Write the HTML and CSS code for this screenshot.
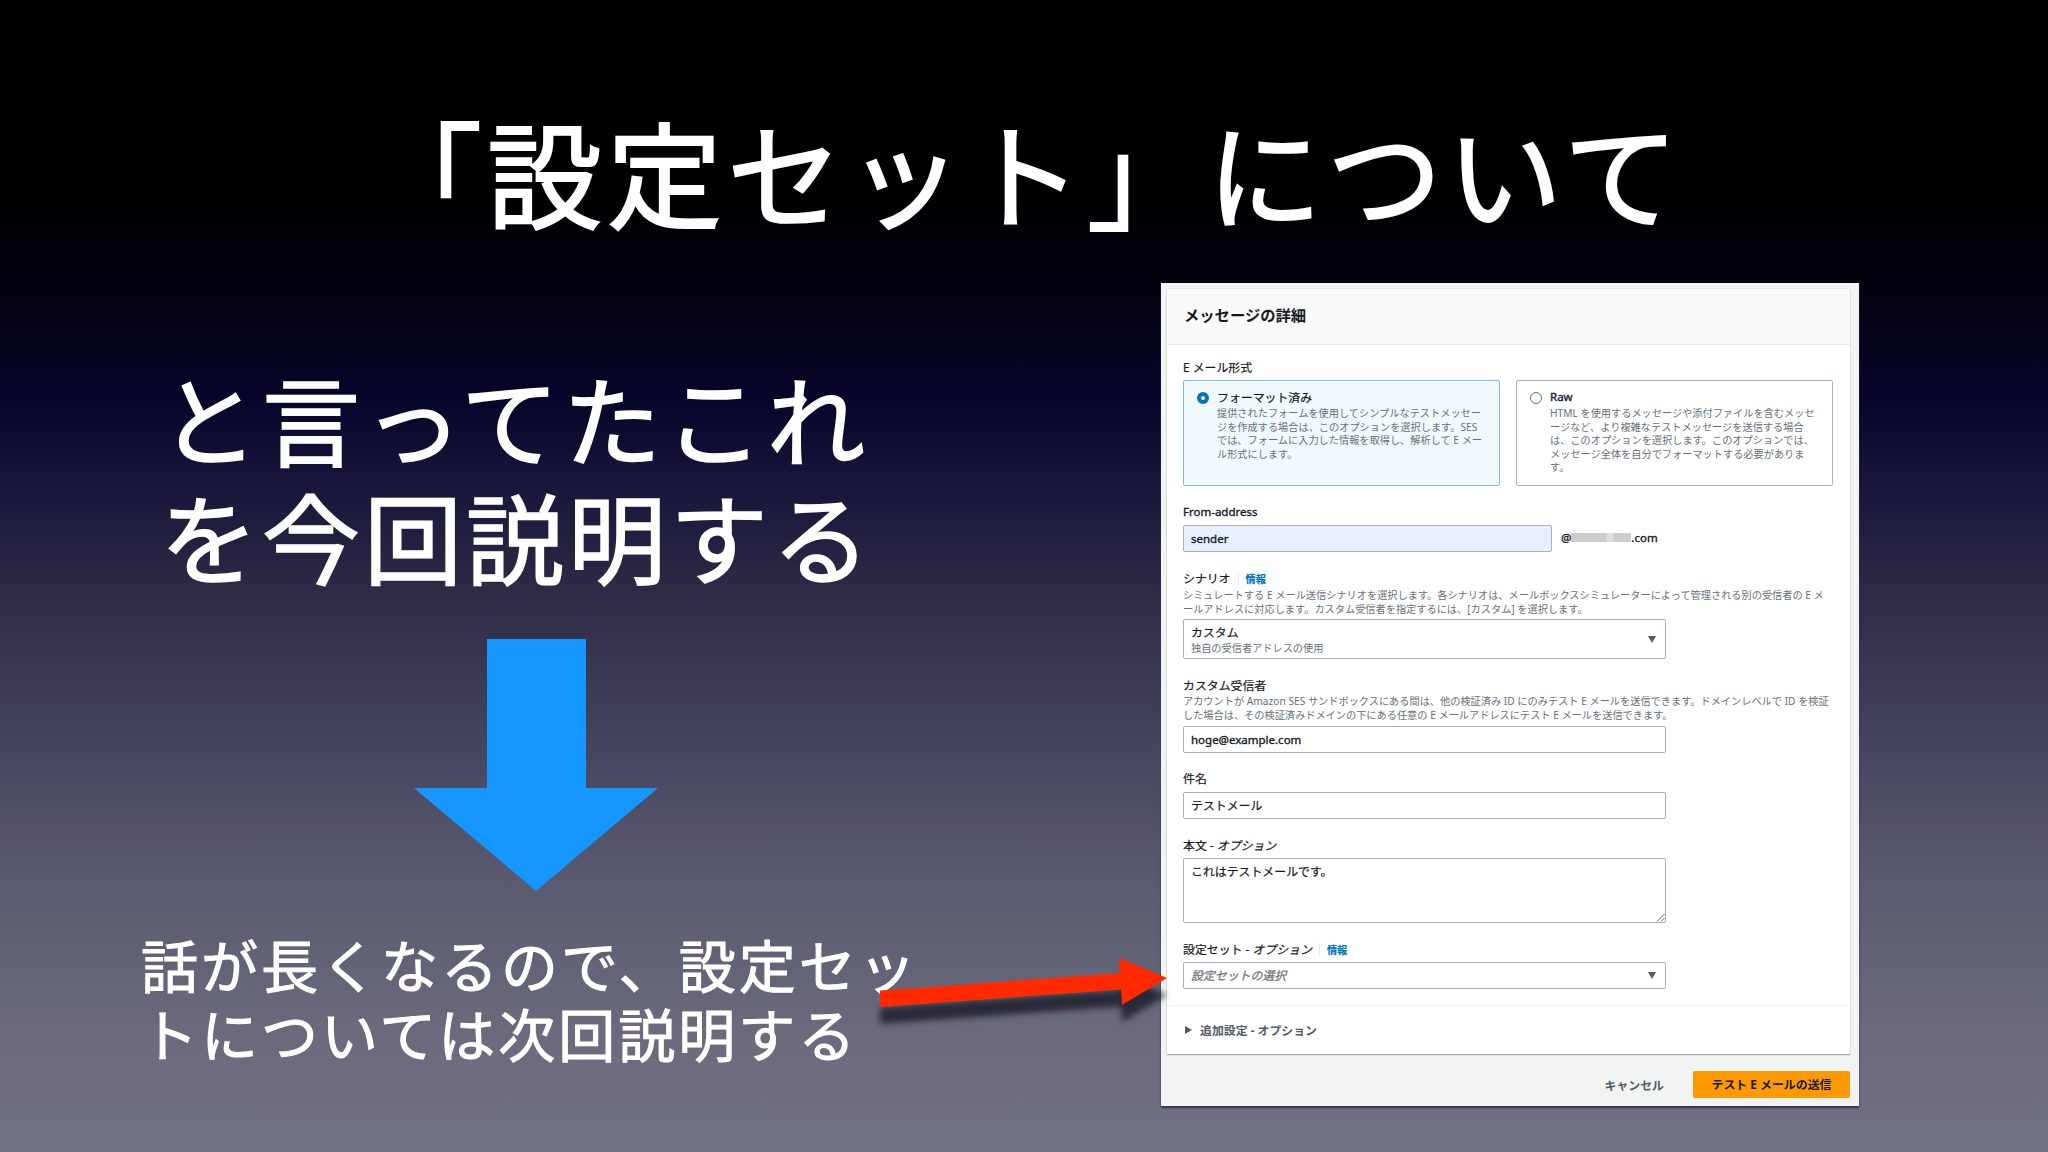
FILE: index.html
```
<!DOCTYPE html>
<html lang="ja">
<head>
  <meta charset="UTF-8">
  <title>「設定セット」について</title>
  <link rel="stylesheet" href="styles.css">
</head>
<body>
  <div class="slide">
    <h1>「設定セット」について</h1>

    <div class="content">
      <div class="story">
        <p class="lead">と言ってたこれ<br>を今回説明する</p>
        <svg class="down-arrow" width="244" height="252" viewBox="0 0 244 252">
          <path d="M73 0H172V149H244L122 252L0 149H73Z" fill="#1696ff"/>
        </svg>
        <p class="note">話が長くなるので、設定セッ<br>トについては次回説明する</p>
      </div>

      <div class="panel">
        <div class="card">
          <h2>メッセージの詳細</h2>

          <div class="form">
            <div class="field">
              <div class="label">E メール形式</div>
              <div class="options">
                <div class="option selected">
                  <span class="radio"></span>
                  <div>
                    <div class="label">フォーマット済み</div>
                    <p class="hint">提供されたフォームを使用してシンプルなテストメッセー<br>ジを作成する場合は、このオプションを選択します。SES<br>では、フォームに入力した情報を取得し、解析して E メー<br>ル形式にします。</p>
                  </div>
                </div>
                <div class="option">
                  <span class="radio"></span>
                  <div>
                    <div class="label latin">Raw</div>
                    <p class="hint">HTML を使用するメッセージや添付ファイルを含むメッセ<br>ージなど、より複雑なテストメッセージを送信する場合<br>は、このオプションを選択します。このオプションでは、<br>メッセージ全体を自分でフォーマットする必要がありま<br>す。</p>
                  </div>
                </div>
              </div>
            </div>

            <div class="field from">
              <div class="label latin">From-address</div>
              <div class="from-row">
                <div class="input filled latin">sender</div>
                <div class="domain latin">@<span class="mask"></span>.com</div>
              </div>
            </div>

            <div class="field scenario">
              <div class="label">シナリオ<span class="info">情報</span></div>
              <p class="hint">シミュレートする E メール送信シナリオを選択します。各シナリオは、メールボックスシミュレーターによって管理される別の受信者の E メ<br>ールアドレスに対応します。カスタム受信者を指定するには、[カスタム] を選択します。</p>
              <div class="input select tall">
                <div>
                  <div class="label">カスタム</div>
                  <p class="hint">独自の受信者アドレスの使用</p>
                </div>
                <span class="caret"></span>
              </div>
            </div>

            <div class="field recipient">
              <div class="label">カスタム受信者</div>
              <p class="hint">アカウントが Amazon SES サンドボックスにある間は、他の検証済み ID にのみテスト E メールを送信できます。ドメインレベルで ID を検証<br>した場合は、その検証済みドメインの下にある任意の E メールアドレスにテスト E メールを送信できます。</p>
              <div class="input latin">hoge@example.com</div>
            </div>

            <div class="field subject">
              <div class="label">件名</div>
              <div class="input">テストメール</div>
            </div>

            <div class="field body-text">
              <div class="label">本文 - <i>オプション</i></div>
              <div class="input textarea">これはテストメールです。
                <svg class="grip" width="9" height="9" viewBox="0 0 9 9">
                  <path d="M1 8.5L8.5 1M5 8.5L8.5 5" stroke="#666" fill="none"/>
                </svg>
              </div>
            </div>

            <div class="field config-set">
              <div class="label">設定セット - <i>オプション</i><span class="info">情報</span></div>
              <div class="input select">
                <i class="placeholder">設定セットの選択</i>
                <span class="caret"></span>
              </div>
            </div>
          </div>

          <div class="extra"><span class="triangle"></span>追加設定 - オプション</div>
        </div>

        <div class="actions">
          <span class="cancel">キャンセル</span>
          <span class="send">テスト E メールの送信</span>
        </div>
      </div>
    </div>

    <!-- pointer from the note to the config set field -->
    <svg class="pointer" width="310" height="90" viewBox="0 0 310 90">
      <path d="M10 40.5L250 23L249 8L297 28L252 55L251 39.5L10 57Z" fill="#ff2a00"/>
    </svg>
  </div>
</body>
</html>
```

FILE: styles.css
```
* {
  box-sizing: border-box;
}

body {
  margin: 0;
  font-family: "Noto Sans", "Noto Sans CJK JP", sans-serif;
  color: #16191f;
}

h1, h2, p {
  margin: 0;
  font-weight: normal;
}

.slide {
  position: relative;
  width: 2048px;
  height: 1152px;
  overflow: hidden;
  background: linear-gradient(#000 0, #000 180px, #02020f 290px, #06052a 400px, #151338 470px, #2c2a45 588px, #44435e 735px, #5a5a70 882px, #6a6a7c 1028px, #727285 1152px);
}

h1 {
  height: 283px;
  padding: 83px 0 0 367px;
  font-family: "Noto Sans CJK JP", sans-serif;
  font-size: 115px;
  line-height: 174px;
  letter-spacing: 5px;
  color: white;
  white-space: nowrap;
  -webkit-text-stroke: 2px white;
}

.content {
  display: flex;
}

.story {
  width: 1161px;
  padding-top: 74px;
  font-family: "Noto Sans CJK JP", sans-serif;
  color: white;
  white-space: nowrap;
}

.lead {
  padding-left: 160px;
  font-size: 98px;
  line-height: 118px;
  letter-spacing: 4px;
  -webkit-text-stroke: 1.6px white;
}

.down-arrow {
  display: block;
  margin: 46px 0 0 414px;
}

.note {
  margin-top: 38px;
  padding-left: 141px;
  font-size: 57px;
  line-height: 69px;
  letter-spacing: 3px;
  -webkit-text-stroke: 1px white;
}

.panel {
  width: 698px;
  height: 823px;
  padding: 6px 9px 0 6px;
  background: #f2f3f3;
  box-shadow: 0 2px 2px #33344a;
  white-space: nowrap;
}

.card {
  height: 765px;
  background: white;
  box-shadow: 0 1px 1px #aaa, 0 0 2px #ccc;
}

h2 {
  height: 56px;
  padding-left: 17px;
  border-bottom: 1px solid #eaeded;
  background: #fafafa;
  font-size: 15.3px;
  font-weight: bold;
  line-height: 52px;
}

.form {
  height: 661px;
  padding: 13px 17px 0 16px;
  border-bottom: 1px solid #eff0f0;
}

.label {
  font-size: 11.9px;
  line-height: 18px;
  -webkit-text-stroke: 0.2px currentColor;
}

.hint {
  padding-top: 1px;
  font-size: 10.2px;
  line-height: 13.6px;
  color: #687078;
  -webkit-text-stroke: 0;
}

.options {
  display: grid;
  grid-template-columns: 1fr 1fr;
  gap: 16px;
  margin-top: 4px;
}

.option {
  display: flex;
  height: 106px;
  padding: 7px 0 0 13px;
  border: 1px solid #aab7b8;
  border-radius: 2px;
}

.option.selected {
  border-color: #7fbfce;
  background: #f1faff;
}

.radio {
  width: 12px;
  height: 12px;
  margin: 4px 8px 0 0;
  border: 1px solid #687078;
  border-radius: 50%;
}

.selected .radio {
  border: 4px solid #0073bb;
}

.from {
  margin-top: 17px;
}

.from-row {
  display: flex;
  align-items: center;
  gap: 9px;
  margin-top: 4px;
}

.input {
  position: relative;
  width: 483px;
  height: 27px;
  padding-left: 7px;
  border: 1px solid #aab0b3;
  border-radius: 2px;
  font-size: 11.9px;
  line-height: 25px;
  -webkit-text-stroke: 0.2px currentColor;
}

.input.filled {
  width: 369px;
  background: #e8f0fe;
}

.domain {
  display: flex;
  align-items: center;
  height: 25px;
  padding-bottom: 2px;
}

.latin {
  font-size: 11.5px;
  -webkit-text-stroke: 0.35px currentColor;
}

.mask {
  width: 60px;
  height: 9px;
  background: linear-gradient(90deg, #ccc 0 58%, #ddd 60% 70%, #ccc 72%);
}

.info {
  margin-left: 7px;
  padding-left: 7px;
  border-left: 1px solid #eaeded;
  font-size: 10.2px;
  font-weight: bold;
  color: #0073bb;
}

.scenario {
  margin-top: 17px;
}

.select {
  display: flex;
  align-items: center;
  justify-content: space-between;
  padding-right: 9px;
}

.tall {
  height: 40px;
  margin-top: 3px;
}

.caret {
  border: 4.5px solid transparent;
  border-top: 7px solid #545b64;
  border-bottom: 0;
}

.recipient {
  margin-top: 17px;
}

.recipient .input {
  margin-top: 4px;
}

.subject {
  margin-top: 16px;
}

.subject .input {
  margin-top: 5px;
}

.body-text {
  margin-top: 17px;
}

.textarea {
  height: 65px;
  margin-top: 4px;
}

.grip {
  position: absolute;
  right: 0;
  bottom: 0;
}

.config-set {
  margin-top: 17px;
}

.config-set .input {
  margin-top: 3px;
}

.placeholder {
  color: #687078;
}

.extra {
  display: flex;
  align-items: center;
  height: 47px;
  padding-left: 18px;
  font-size: 11.9px;
  font-weight: bold;
  color: #545b64;
}

.triangle {
  margin-right: 8px;
  border: 4.5px solid transparent;
  border-left: 7px solid #545b64;
  border-right: 0;
}

.actions {
  display: flex;
  align-items: center;
  justify-content: flex-end;
  gap: 29px;
  height: 60px;
  font-size: 11.9px;
  font-weight: bold;
  color: #545b64;
}

.send {
  width: 157px;
  height: 27px;
  border-radius: 2px;
  background: #ff9900;
  line-height: 26px;
  text-align: center;
  color: #16191f;
}

.pointer {
  position: absolute;
  left: 870px;
  top: 950px;
  filter: drop-shadow(0 17px 3px rgba(20, 22, 34, 0.75));
}
```
